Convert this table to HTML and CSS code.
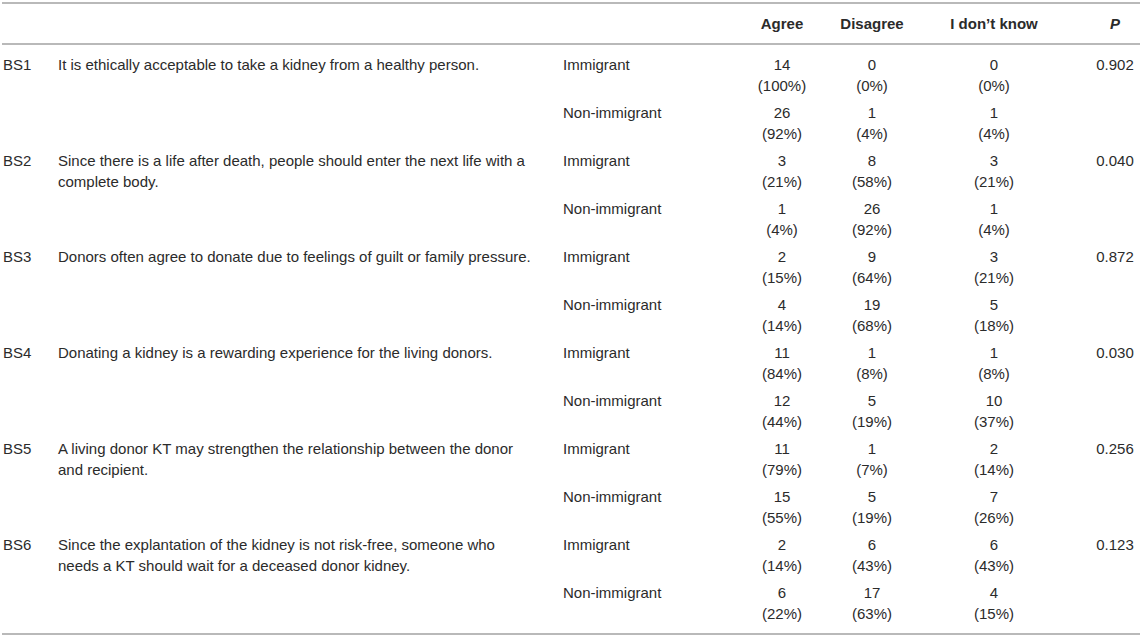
FILE: index.html
```html
<!DOCTYPE html>
<html lang="en">
<head>
<meta charset="utf-8">
<title>Beliefs about living kidney donation</title>
<link rel="stylesheet" href="styles.css">
</head>
<body>
<table class="data">
  <colgroup>
    <col class="c-id">
    <col class="c-stmt">
    <col class="c-grp">
    <col class="c-agree">
    <col class="c-dis">
    <col class="c-idk">
    <col class="c-p">
  </colgroup>
  <thead>
    <tr>
      <th class="id"></th>
      <th class="stmt"></th>
      <th class="grp"></th>
      <th class="num">Agree</th>
      <th class="num">Disagree</th>
      <th class="num">I don’t know</th>
      <th class="num p"><em>P</em></th>
    </tr>
  </thead>
  <tbody>
    <tr class="first">
      <td class="id" rowspan="2">BS1</td>
      <td class="stmt" rowspan="2">It is ethically acceptable to take a kidney from a healthy person.</td>
      <td class="grp">Immigrant</td>
      <td class="num">14<br>(100%)</td>
      <td class="num">0<br>(0%)</td>
      <td class="num">0<br>(0%)</td>
      <td class="num p" rowspan="2">0.902</td>
    </tr>
    <tr>
      <td class="grp">Non-immigrant</td>
      <td class="num">26<br>(92%)</td>
      <td class="num">1<br>(4%)</td>
      <td class="num">1<br>(4%)</td>
    </tr>
    <tr>
      <td class="id" rowspan="2">BS2</td>
      <td class="stmt" rowspan="2">Since there is a life after death, people should enter the next life with a<br>complete body.</td>
      <td class="grp">Immigrant</td>
      <td class="num">3<br>(21%)</td>
      <td class="num">8<br>(58%)</td>
      <td class="num">3<br>(21%)</td>
      <td class="num p" rowspan="2">0.040</td>
    </tr>
    <tr>
      <td class="grp">Non-immigrant</td>
      <td class="num">1<br>(4%)</td>
      <td class="num">26<br>(92%)</td>
      <td class="num">1<br>(4%)</td>
    </tr>
    <tr>
      <td class="id" rowspan="2">BS3</td>
      <td class="stmt" rowspan="2">Donors often agree to donate due to feelings of guilt or family pressure.</td>
      <td class="grp">Immigrant</td>
      <td class="num">2<br>(15%)</td>
      <td class="num">9<br>(64%)</td>
      <td class="num">3<br>(21%)</td>
      <td class="num p" rowspan="2">0.872</td>
    </tr>
    <tr>
      <td class="grp">Non-immigrant</td>
      <td class="num">4<br>(14%)</td>
      <td class="num">19<br>(68%)</td>
      <td class="num">5<br>(18%)</td>
    </tr>
    <tr>
      <td class="id" rowspan="2">BS4</td>
      <td class="stmt" rowspan="2">Donating a kidney is a rewarding experience for the living donors.</td>
      <td class="grp">Immigrant</td>
      <td class="num">11<br>(84%)</td>
      <td class="num">1<br>(8%)</td>
      <td class="num">1<br>(8%)</td>
      <td class="num p" rowspan="2">0.030</td>
    </tr>
    <tr>
      <td class="grp">Non-immigrant</td>
      <td class="num">12<br>(44%)</td>
      <td class="num">5<br>(19%)</td>
      <td class="num">10<br>(37%)</td>
    </tr>
    <tr>
      <td class="id" rowspan="2">BS5</td>
      <td class="stmt" rowspan="2">A living donor KT may strengthen the relationship between the donor<br>and recipient.</td>
      <td class="grp">Immigrant</td>
      <td class="num">11<br>(79%)</td>
      <td class="num">1<br>(7%)</td>
      <td class="num">2<br>(14%)</td>
      <td class="num p" rowspan="2">0.256</td>
    </tr>
    <tr>
      <td class="grp">Non-immigrant</td>
      <td class="num">15<br>(55%)</td>
      <td class="num">5<br>(19%)</td>
      <td class="num">7<br>(26%)</td>
    </tr>
    <tr>
      <td class="id" rowspan="2">BS6</td>
      <td class="stmt" rowspan="2">Since the explantation of the kidney is not risk-free, someone who<br>needs a KT should wait for a deceased donor kidney.</td>
      <td class="grp">Immigrant</td>
      <td class="num">2<br>(14%)</td>
      <td class="num">6<br>(43%)</td>
      <td class="num">6<br>(43%)</td>
      <td class="num p" rowspan="2">0.123</td>
    </tr>
    <tr class="last">
      <td class="grp">Non-immigrant</td>
      <td class="num">6<br>(22%)</td>
      <td class="num">17<br>(63%)</td>
      <td class="num">4<br>(15%)</td>
    </tr>
  </tbody>
</table>
</body>
</html>
```

FILE: styles.css
```css
html, body {
  margin: 0;
  padding: 0;
  background: #ffffff;
}

body {
  padding: 2px 2px 0 2px;
  font-family: "Liberation Sans", Arial, Helvetica, sans-serif;
  font-size: 15px;
  line-height: 21px;
  color: #2b2b2b;
}

.data {
  width: 1138px;
  table-layout: fixed;
  border-collapse: collapse;
  border-top: 2px solid #b9b9b9;
  border-bottom: 2px solid #b9b9b9;
}

.c-id { width: 56px; }
.c-stmt { width: 505px; }
.c-grp { width: 177px; }
.c-agree { width: 84px; }
.c-dis { width: 96px; }
.c-idk { width: 148px; }
.c-p { width: 72px; }

.data thead th {
  font-weight: bold;
  padding: 9px 0;
  border-bottom: 2px solid #b9b9b9;
  white-space: nowrap;
}

.data thead th em {
  font-style: italic;
}

.data td {
  padding: 3px 0;
  vertical-align: top;
  white-space: nowrap;
}

.data .first td {
  padding-top: 9px;
}

.data .last td {
  padding-bottom: 9px;
}

.data .id {
  text-align: left;
  padding-left: 1px;
}

.data .stmt,
.data .grp {
  text-align: left;
}

.data .num {
  text-align: center;
}

.data .p {
  padding-left: 22px;
}
```
